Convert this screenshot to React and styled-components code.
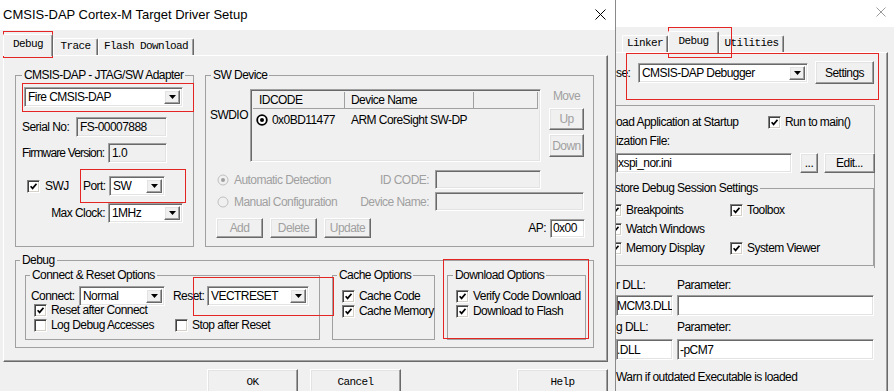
import React from "react";
import styled, { createGlobalStyle, css } from "styled-components";

const GlobalStyle = createGlobalStyle`
  html, body { margin: 0; padding: 0; background: #f0f0f0; }
  body {
    font-family: "Liberation Sans", Arial, sans-serif;
    font-size: 12px;
    letter-spacing: -0.55px;
    color: #000;
  }
  * { box-sizing: border-box; }
`;

// classic win32 bevels
const sunken = css`
  border: 1px solid;
  border-color: #a0a0a0 #fff #fff #a0a0a0;
  box-shadow: inset 1px 1px 0 #696969, inset -1px -1px 0 #e3e3e3;
`;
const raised = css`
  background: #f0f0f0;
  border: 1px solid;
  border-color: #fff #696969 #696969 #fff;
  box-shadow: inset -1px -1px 0 #a0a0a0, inset 1px 1px 0 #e3e3e3;
`;
const mono = css`
  font-family: "Liberation Mono", "Courier New", monospace;
  font-size: 11px;
  letter-spacing: -0.6px;
`;

const Screen = styled.div`
  position: relative;
  width: 894px;
  height: 391px;
  overflow: hidden;
  display: flex;
  background: #f0f0f0;
`;

const LeftDialog = styled.div`
  width: 616px;
  flex: none;
  display: flex;
  flex-direction: column;
  border-right: 1px solid #8a8a8a;
`;

const RightDialog = styled.div`
  flex: 1;
  display: flex;
  flex-direction: column;
  overflow: hidden;
`;

const TitleBar = styled.div`
  height: ${(p) => p.$h}px;
  flex: none;
  background: #fff;
  display: flex;
  align-items: center;
  justify-content: space-between;
  padding: 0 ${(p) => p.$pr}px 0 3px;
`;

const TitleText = styled.span`
  font-size: 13px;
  letter-spacing: 0;
  padding-bottom: 2px;
`;

const CloseBox = styled.span`
  display: flex;
  margin-left: auto;
  padding-bottom: ${(p) => p.$pb || 0}px;
`;

const CloseGlyph = ({ size, color, pb }) => (
  <CloseBox $pb={pb}>
    <svg width={size} height={size} viewBox={`0 0 ${size} ${size}`}>
      <path d={`M0.5 0.5 L${size - 0.5} ${size - 0.5} M${size - 0.5} 0.5 L0.5 ${size - 0.5}`} stroke={color} strokeWidth="1" />
    </svg>
  </CloseBox>
);

const DialogBody = styled.div`
  flex: 1;
  padding-left: ${(p) => p.$pl || 0}px;
  display: flex;
  flex-direction: column;
`;

const TabStrip = styled.div`
  height: 25px;
  flex: none;
  display: flex;
  align-items: flex-end;
  padding-left: ${(p) => p.$pl || 0}px;
`;

const Tab = styled.div`
  ${mono};
  width: ${(p) => p.$w}px;
  height: ${(p) => (p.$active ? 22 : 17)}px;
  margin-bottom: ${(p) => (p.$active ? -1 : 0)}px;
  position: relative;
  z-index: ${(p) => (p.$active ? 1 : 0)};
  background: #f0f0f0;
  border-top: 1px solid #fff;
  border-left: 1px solid #fff;
  border-right: 1px solid #696969;
  border-radius: 2px 2px 0 0;
  box-shadow: inset -1px 0 0 #a0a0a0;
  display: flex;
  align-items: ${(p) => (p.$active ? "center" : "flex-start")};
  justify-content: center;
  padding-top: ${(p) => (p.$active ? 0 : 1)}px;
  padding-bottom: ${(p) => (p.$active ? 4 : 0)}px;
`;

const TabPanel = styled.div`
  width: ${(p) => p.$w}px;
  height: ${(p) => p.$h}px;
  flex: none;
  border-top: 1px solid #fff;
  border-left: ${(p) => (p.$open ? "none" : "1px solid #fff")};
  border-right: 1px solid #696969;
  border-bottom: ${(p) => (p.$open ? "none" : "1px solid #696969")};
  box-shadow: inset -1px -1px 0 #a0a0a0;
  padding: ${(p) => p.$pad};
  display: flex;
  flex-direction: column;
`;

const Group = styled.fieldset`
  margin: 0 0 0 ${(p) => p.$ml || 0}px;
  padding: 0;
  min-width: 0;
  width: ${(p) => p.$w}px;
  height: ${(p) => p.$h}px;
  flex: none;
  border: 1px solid #a0a0a0;
  border-radius: 0;
`;

const Legend = styled.legend`
  margin-left: ${(p) => p.$ml}px;
  padding: 0 2px;
  line-height: 14px;
  white-space: nowrap;
`;

const Row = styled.div`
  display: flex;
  align-items: ${(p) => p.$align || "center"};
  margin-top: ${(p) => p.$mt || 0}px;
  margin-left: ${(p) => p.$ml || 0}px;
  margin-right: ${(p) => p.$mr || 0}px;
  height: ${(p) => (p.$h ? `${p.$h}px` : "auto")};
  gap: ${(p) => p.$gap || 0}px;
`;

const Label = styled.span`
  width: ${(p) => (p.$w ? `${p.$w}px` : "auto")};
  margin-left: ${(p) => p.$ml || 0}px;
  flex: none;
  text-align: ${(p) => (p.$right ? "right" : "left")};
  padding-right: ${(p) => (p.$right ? 3 : 0)}px;
  color: ${(p) => (p.$dim ? "#a0a0a0" : "#000")};
  letter-spacing: ${(p) => (p.$tight ? "-0.85px" : "inherit")};
  white-space: nowrap;
  line-height: 14px;
`;

const TextBox = styled.div`
  ${sunken};
  background: ${(p) => (p.$gray ? "#f0f0f0" : "#fff")};
  width: ${(p) => p.$w}px;
  height: ${(p) => p.$h || 20}px;
  margin-left: ${(p) => p.$ml || 0}px;
  flex: none;
  display: flex;
  align-items: center;
  padding-left: ${(p) => p.$pl ?? 3}px;
  white-space: nowrap;
  overflow: hidden;
`;

const Combo = styled.div`
  ${sunken};
  background: #fff;
  width: ${(p) => p.$w}px;
  height: ${(p) => p.$h || 20}px;
  flex: none;
  display: flex;
  align-items: stretch;
  padding: 2px;
`;

const ComboText = styled.span`
  flex: 1;
  padding-left: 1px;
  display: flex;
  align-items: center;
  white-space: nowrap;
  overflow: hidden;
`;

const DropButton = styled.span`
  ${raised};
  width: 16px;
  flex: none;
  display: flex;
  align-items: center;
  justify-content: center;
`;

const Arrow = () => (
  <svg width="7" height="4" viewBox="0 0 7 4">
    <path d="M0 0 H7 L3.5 4 Z" fill="#000" />
  </svg>
);

const Select = ({ w, h, children }) => (
  <Combo $w={w} $h={h}>
    <ComboText>{children}</ComboText>
    <DropButton>
      <Arrow />
    </DropButton>
  </Combo>
);

const Button = styled.div`
  ${raised};
  width: ${(p) => p.$w}px;
  height: ${(p) => p.$h || 22}px;
  margin-left: ${(p) => p.$ml || 0}px;
  margin-top: ${(p) => p.$mt || 0}px;
  flex: none;
  display: flex;
  align-items: center;
  justify-content: center;
  color: ${(p) => (p.$dim ? "#a0a0a0" : "#000")};
  ${(p) => p.$mono && mono}
`;

const CheckItem = styled.span`
  display: flex;
  align-items: center;
  gap: ${(p) => p.$gap ?? 4}px;
  width: ${(p) => (p.$w ? `${p.$w}px` : "auto")};
  margin-left: ${(p) => p.$ml || 0}px;
  flex: none;
  white-space: nowrap;
  line-height: 14px;
  color: ${(p) => (p.$dim ? "#a0a0a0" : "#000")};
`;

const Box = styled.span`
  width: 13px;
  height: 13px;
  flex: none;
  background: #fff;
  border: 1px solid;
  border-color: #808080 #fff #fff #808080;
  box-shadow: inset 1px 1px 0 #404040, inset -1px -1px 0 #d4d0c8;
  display: flex;
  align-items: center;
  justify-content: center;
`;

const Check = ({ on = true, w, ml, gap, children }) => (
  <CheckItem $w={w} $ml={ml} $gap={gap}>
    <Box>
      {on && (
        <svg width="7" height="7" viewBox="0 0 7 7">
          <path d="M0.6 3.2 L2.6 5.4 L6.5 0.9" stroke="#000" strokeWidth="1.7" fill="none" />
        </svg>
      )}
    </Box>
    {children}
  </CheckItem>
);

const RadioIcon = ({ on, dim, bold }) => (
  <svg width="12" height="12" viewBox="0 0 12 12">
    <circle
      cx="6"
      cy="6"
      r={bold ? 4.8 : 5}
      fill={dim ? "#f0f0f0" : "#fff"}
      stroke={dim ? "#c0c0c0" : "#000"}
      strokeWidth={bold ? 1.8 : 1}
    />
    {on && <circle cx="6" cy="6" r="2" fill={dim ? "#a0a0a0" : "#000"} />}
  </svg>
);

const Radio = ({ on, dim, children }) => (
  <CheckItem $dim={dim} $gap={5}>
    <RadioIcon on={on} dim={dim} />
    {children}
  </CheckItem>
);

const Pair = styled.div`
  width: ${(p) => p.$w}px;
  flex: none;
  display: flex;
  justify-content: space-between;
  align-items: center;
`;

const Spacer = styled.span`
  flex: 1;
`;

const SideLabel = styled.span`
  width: 44px;
  flex: none;
  padding: 19px 0 0 4px;
  line-height: 14px;
`;

const Table = styled.div`
  ${sunken};
  background: #f0f0f0;
  width: 291px;
  height: 73px;
  flex: none;
  padding: 2px;
  display: flex;
  flex-direction: column;
`;

const HeadRow = styled.div`
  display: flex;
  height: 17px;
  flex: none;
`;

const HeadCell = styled.div`
  width: ${(p) => (p.$w ? `${p.$w}px` : "auto")};
  flex: ${(p) => (p.$w ? "none" : 1)};
  border-right: 1px solid #a0a0a0;
  border-bottom: 1px solid #a0a0a0;
  background: #f0f0f0;
  padding-left: 6px;
  display: flex;
  align-items: center;
  white-space: nowrap;
`;

const BodyRow = styled.div`
  display: flex;
  align-items: center;
  height: 20px;
  margin-top: 1px;
`;

const BodyCell = styled.div`
  width: ${(p) => p.$w}px;
  flex: none;
  display: flex;
  align-items: center;
  gap: 4px;
  padding-left: ${(p) => p.$pl}px;
  white-space: nowrap;
`;

const SideColumn = styled.div`
  width: 35px;
  margin-left: 8px;
  flex: none;
  display: flex;
  flex-direction: column;
`;

const MoveLabel = styled.span`
  line-height: 14px;
  text-align: center;
  color: #a0a0a0;
`;

const Frame = styled.div`
  width: ${(p) => p.$w}px;
  height: ${(p) => p.$h}px;
  margin-top: ${(p) => p.$mt}px;
  flex: none;
  border-top: 1px solid #a0a0a0;
  border-right: 1px solid #a0a0a0;
  display: flex;
  flex-direction: column;
`;

const RedMark = styled.div`
  position: absolute;
  left: ${(p) => p.$x}px;
  top: ${(p) => p.$y}px;
  width: ${(p) => p.$w}px;
  height: ${(p) => p.$h}px;
  border: 1px solid #e52424;
  pointer-events: none;
`;

const marks = [
  { x: 3, y: 31, w: 50, h: 27 },
  { x: 22, y: 83, w: 172, h: 29 },
  { x: 80, y: 169, w: 106, h: 34 },
  { x: 193, y: 277, w: 141, h: 39 },
  { x: 443, y: 259, w: 146, h: 80 },
  { x: 668, y: 27, w: 64, h: 31 },
  { x: 626, y: 53, w: 253, h: 47 },
];

export default function App() {
  return (
    <>
      <GlobalStyle />
      <Screen>
        <LeftDialog>
          <TitleBar $h={30} $pr={9}>
            <TitleText>CMSIS-DAP Cortex-M Target Driver Setup</TitleText>
            <CloseGlyph size={11} color="#000" pb={2} />
          </TitleBar>
          <DialogBody $pl={3}>
            <TabStrip>
              <Tab $w={50} $active>Debug</Tab>
              <Tab $w={45}>Trace</Tab>
              <Tab $w={96}>Flash Download</Tab>
            </TabStrip>
            <TabPanel $w={605} $h={307} $pad="12px 0 0 11px">
              <Row $align="flex-start" $gap={11}>
                <Group $w={179} $h={179}>
                  <Legend $ml={6}>CMSIS-DAP - JTAG/SW Adapter</Legend>
                  <Row $mt={5} $ml={8} $h={20}>
                    <Select w={159}>Fire CMSIS-DAP</Select>
                  </Row>
                  <Row $mt={10} $ml={6} $h={20}>
                    <Label $w={54}>Serial No:</Label>
                    <TextBox $w={91} $gray>FS-00007888</TextBox>
                  </Row>
                  <Row $mt={6} $ml={6} $h={20}>
                    <Label $w={86} $tight>Firmware Version:</Label>
                    <TextBox $w={59} $gray>1.0</TextBox>
                  </Row>
                  <Row $mt={13} $ml={11} $h={20}>
                    <Check w={56} gap={5}>SWJ</Check>
                    <Label $w={26}>Port:</Label>
                    <Select w={56}>SW</Select>
                  </Row>
                  <Row $mt={7} $h={20}>
                    <Label $w={92} $right>Max Clock:</Label>
                    <Select w={75}>1MHz</Select>
                  </Row>
                </Group>
                <Group $w={389} $h={179}>
                  <Legend $ml={5}>SW Device</Legend>
                  <Row $mt={7} $align="flex-start">
                    <SideLabel>SWDIO</SideLabel>
                    <Table>
                      <HeadRow>
                        <HeadCell $w={92}>IDCODE</HeadCell>
                        <HeadCell $w={129}>Device Name</HeadCell>
                        <HeadCell />
                      </HeadRow>
                      <BodyRow>
                        <BodyCell $w={92} $pl={3}>
                          <RadioIcon on bold />
                          0x0BD11477
                        </BodyCell>
                        <BodyCell $w={129} $pl={6}>ARM CoreSight SW-DP</BodyCell>
                      </BodyRow>
                    </Table>
                    <SideColumn>
                      <MoveLabel>Move</MoveLabel>
                      <Button $w={35} $h={22} $mt={5} $dim>Up</Button>
                      <Button $w={35} $h={23} $mt={4} $dim>Down</Button>
                    </SideColumn>
                  </Row>
                  <Row $mt={8} $ml={11} $h={19}>
                    <Pair $w={212}>
                      <Radio on dim>Automatic Detection</Radio>
                      <Label $dim>ID CODE:</Label>
                    </Pair>
                    <TextBox $w={106} $h={19} $ml={6} $gray />
                  </Row>
                  <Row $mt={3} $ml={11} $h={19}>
                    <Pair $w={212}>
                      <Radio dim>Manual Configuration</Radio>
                      <Label $dim>Device Name:</Label>
                    </Pair>
                    <TextBox $w={149} $h={19} $ml={6} $gray />
                  </Row>
                  <Row $mt={7} $ml={10} $mr={8} $h={20}>
                    <Button $w={47} $h={20} $dim>Add</Button>
                    <Button $w={47} $h={20} $ml={7} $dim>Delete</Button>
                    <Button $w={47} $h={20} $ml={7} $dim>Update</Button>
                    <Spacer />
                    <Label>AP:</Label>
                    <TextBox $w={35} $h={19} $ml={4} $pl={2}>0x00</TextBox>
                  </Row>
                </Group>
              </Row>
              <Row $mt={6}>
                <Group $w={579} $h={95}>
                  <Legend $ml={4}>Debug</Legend>
                  <Row $mt={1} $ml={9} $gap={12} $align="flex-start">
                    <Group $w={295} $h={72}>
                      <Legend $ml={4}>Connect &amp; Reset Options</Legend>
                      <Row $mt={4} $h={20}>
                        <Label $w={48} $ml={5}>Connect:</Label>
                        <Select w={86}>Normal</Select>
                        <Label $w={34} $ml={8}>Reset:</Label>
                        <Select w={102}>VECTRESET</Select>
                      </Row>
                      <Row $mt={-3} $ml={8} $h={14}>
                        <Check>Reset after Connect</Check>
                      </Row>
                      <Row $mt={1} $ml={8} $h={14}>
                        <Check on={false} w={141}>Log Debug Accesses</Check>
                        <Check on={false}>Stop after Reset</Check>
                      </Row>
                    </Group>
                    <Group $w={103} $h={72}>
                      <Legend $ml={4}>Cache Options</Legend>
                      <Row $mt={7} $ml={9} $h={14}>
                        <Check>Cache Code</Check>
                      </Row>
                      <Row $mt={1} $ml={9} $h={14}>
                        <Check>Cache Memory</Check>
                      </Row>
                    </Group>
                    <Group $w={139} $h={72}>
                      <Legend $ml={5}>Download Options</Legend>
                      <Row $mt={7} $ml={8} $h={14}>
                        <Check>Verify Code Download</Check>
                      </Row>
                      <Row $mt={1} $ml={8} $h={14}>
                        <Check>Download to Flash</Check>
                      </Row>
                    </Group>
                  </Row>
                </Group>
              </Row>
            </TabPanel>
            <Row $mt={7}>
              <Button $w={91} $h={25} $ml={204} $mono>OK</Button>
              <Button $w={91} $h={25} $ml={12} $mono>Cancel</Button>
              <Button $w={91} $h={25} $ml={116} $mono>Help</Button>
            </Row>
          </DialogBody>
        </LeftDialog>

        <RightDialog>
          <TitleBar $h={27} $pr={8}>
            <CloseGlyph size={10} color="#9a9a9a" pb={3} />
          </TitleBar>
          <DialogBody>
            <TabStrip $pl={6}>
              <Tab $w={46}>Linker</Tab>
              <Tab $w={51} $active>Debug</Tab>
              <Tab $w={65}>Utilities</Tab>
            </TabStrip>
            <TabPanel $w={272} $h={340} $pad="0" $open>
              <Row $mt={8} $h={23}>
                <Label $w={22}>se:</Label>
                <Select w={170}>CMSIS-DAP Debugger</Select>
                <Button $w={59} $h={23} $ml={7}>Settings</Button>
              </Row>
              <Frame $w={259} $h={163} $mt={21}>
                <Row $mt={9} $h={14}>
                  <Label $w={152}>oad Application at Startup</Label>
                  <Check>Run to main()</Check>
                </Row>
                <Row $mt={5} $h={14}>
                  <Label>ization File:</Label>
                </Row>
                <Row $mt={5} $h={20}>
                  <TextBox $w={176} $pl={1}>xspi_nor.ini</TextBox>
                  <Button $w={18} $h={20} $ml={8}>...</Button>
                  <Button $w={51} $h={20} $ml={6}>Edit...</Button>
                </Row>
                <Row $mt={8}>
                  <Group $w={278} $h={85} $ml={-20}>
                    <Legend $ml={16}>store Debug Session Settings</Legend>
                    <Row $mt={8} $ml={12} $h={14}>
                      <Check w={121}>Breakpoints</Check>
                      <Check>Toolbox</Check>
                    </Row>
                    <Row $mt={5} $ml={12} $h={14}>
                      <Check>Watch Windows</Check>
                    </Row>
                    <Row $mt={5} $ml={12} $h={14}>
                      <Check w={121}>Memory Display</Check>
                      <Check>System Viewer</Check>
                    </Row>
                  </Group>
                </Row>
              </Frame>
              <Row $mt={10} $h={14}>
                <Label $w={61}>r DLL:</Label>
                <Label>Parameter:</Label>
              </Row>
              <Row $mt={3} $h={21}>
                <TextBox $w={57} $h={21} $pl={0}>MCM3.DLL</TextBox>
                <TextBox $w={197} $h={21} $ml={4} />
              </Row>
              <Row $mt={4} $h={14}>
                <Label $w={61}>g DLL:</Label>
                <Label>Parameter:</Label>
              </Row>
              <Row $mt={5} $h={21}>
                <TextBox $w={57} $h={21} $pl={0}>.DLL</TextBox>
                <TextBox $w={197} $h={21} $ml={4} $pl={2}>-pCM7</TextBox>
              </Row>
              <Row $mt={10} $h={14}>
                <Label>Warn if outdated Executable is loaded</Label>
              </Row>
            </TabPanel>
          </DialogBody>
        </RightDialog>

        {marks.map((m, i) => (
          <RedMark key={i} $x={m.x} $y={m.y} $w={m.w} $h={m.h} />
        ))}
      </Screen>
    </>
  );
}
